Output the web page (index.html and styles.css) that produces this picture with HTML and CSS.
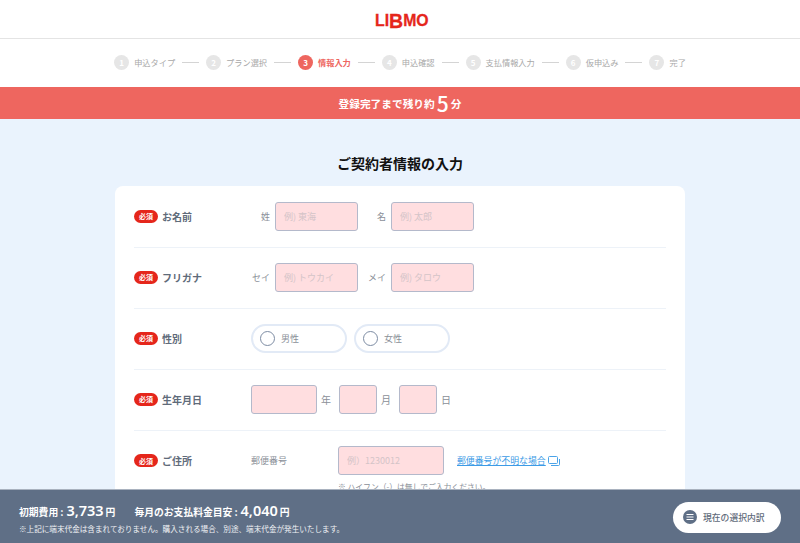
FILE: index.html
```html
<!DOCTYPE html>
<html lang="ja">
<head>
    <meta charset="UTF-8">
    <meta name="viewport" content="width=device-width, initial-scale=1.0">
    <title>LIBMO お申込み</title>
    <link rel="stylesheet" href="styles.css">
</head>
<body>
    <div class="scroll">
        <header class="logo-bar">
            <div class="logo">LI<span class="logo-b">B</span>MO</div>
        </header>

        <!-- Steps -->
        <ol class="steps">
            <li class="step"><span class="num">1</span>申込タイプ</li>
            <li class="line"></li>
            <li class="step"><span class="num">2</span>プラン選択</li>
            <li class="line"></li>
            <li class="step current"><span class="num">3</span>情報入力</li>
            <li class="line"></li>
            <li class="step"><span class="num">4</span>申込確認</li>
            <li class="line"></li>
            <li class="step"><span class="num">5</span>支払情報入力</li>
            <li class="line"></li>
            <li class="step"><span class="num">6</span>仮申込み</li>
            <li class="line"></li>
            <li class="step"><span class="num">7</span>完了</li>
        </ol>

        <div class="banner">登録完了まで残り約<span class="banner-num">5</span>分</div>

        <main class="content">
            <h1>ご契約者情報の入力</h1>

            <div class="card">
                <div class="row">
                    <div class="row-label"><span class="must">必須</span>お名前</div>
                    <div class="fields">
                        <label class="pre pre-name">姓</label>
                        <input class="input w82" type="text" placeholder="例) 東海">
                        <label class="pre pre-name">名</label>
                        <input class="input w82" type="text" placeholder="例) 太郎">
                    </div>
                </div>

                <div class="row">
                    <div class="row-label"><span class="must">必須</span>フリガナ</div>
                    <div class="fields">
                        <label class="pre pre-name">セイ</label>
                        <input class="input w82" type="text" placeholder="例) トウカイ">
                        <label class="pre pre-name">メイ</label>
                        <input class="input w82" type="text" placeholder="例) タロウ">
                    </div>
                </div>

                <div class="row">
                    <div class="row-label"><span class="must">必須</span>性別</div>
                    <div class="fields gender">
                        <div class="radio"><span class="circle"></span>男性</div>
                        <div class="radio"><span class="circle"></span>女性</div>
                    </div>
                </div>

                <div class="row">
                    <div class="row-label"><span class="must">必須</span>生年月日</div>
                    <div class="fields birth">
                        <input class="input w66" type="text">
                        <span class="unit">年</span>
                        <input class="input w38" type="text">
                        <span class="unit">月</span>
                        <input class="input w38" type="text">
                        <span class="unit">日</span>
                    </div>
                </div>

                <div class="row row-last">
                    <div class="row-label"><span class="must">必須</span>ご住所</div>
                    <div class="address">
                        <div class="fields">
                            <span class="zip-label">郵便番号</span>
                            <input class="input w106" type="text" placeholder="例）1230012">
                            <a class="zip-link" href="#">郵便番号が不明な場合</a>
                            <svg class="ext" width="12" height="10" viewBox="0 0 12 10" fill="none" stroke="#4aa3e8" stroke-width="1">
                                <rect x="0.500" y="0.500" width="9" height="7" rx="1"/>
                                <path d="M11.500 3v5.500a1 1 0 0 1-1 1H3"/>
                            </svg>
                        </div>
                        <p class="note">※ ハイフン（-）は無しでご入力ください。</p>
                    </div>
                </div>
            </div>
        </main>
    </div>

    <footer class="summary">
        <div class="prices">
            <div class="price-line">
                <span>初期費用</span><span class="colon">:</span><span class="price-num">3,733</span><span class="yen">円</span>
                <span class="price-second">毎月のお支払料金目安</span><span class="colon">:</span><span class="price-num">4,040</span><span class="yen">円</span>
            </div>
            <p class="price-note">※上記に端末代金は含まれておりません。購入される場合、別途、端末代金が発生いたします。</p>
        </div>
        <button class="detail-btn">
            <svg width="14" height="14" viewBox="0 0 14 14">
                <circle cx="7" cy="7" r="7" fill="#5f6f86"/>
                <path d="M3.500 4.500h7M3.500 7h7M3.500 9.500h7" stroke="#fff" stroke-width="1"/>
            </svg>
            現在の選択内訳
        </button>
    </footer>
</body>
</html>
```

FILE: styles.css
```css
* {
    box-sizing: border-box;
}
html, body {
    height: 100%;
}
body {
    margin: 0;
    display: flex;
    flex-direction: column;
    overflow: hidden;
    font-family: "Noto Sans CJK JP", "Noto Sans", sans-serif;
    color: #5f6b7a;
    background: #fff;
}
.scroll {
    flex: 1;
    min-height: 0;
    overflow: hidden;
}
.logo-bar {
    height: 39px;
    border-bottom: 1px solid #e4e4e4;
    display: flex;
    justify-content: center;
    align-items: center;
}
.logo {
    font-family: "Liberation Sans", sans-serif;
    font-weight: bold;
    font-size: 17px;
    line-height: 17px;
    color: #e5261b;
    -webkit-text-stroke: 0.3px #e5261b;
    padding-top: 3px;
    margin-left: 3px;
    transform: scaleX(0.93);
}
.logo-b {
    font-size: 21px;
    line-height: 17px;
    vertical-align: -2px;
}

.steps {
    list-style: none;
    margin: 0;
    padding: 0 0 2px;
    height: 48px;
    display: flex;
    justify-content: center;
    align-items: center;
    gap: 7px;
    font-size: 8.200px;
    color: #a8a8a8;
}
.step {
    display: flex;
    align-items: center;
    gap: 5px;
}
.num {
    width: 15px;
    height: 15px;
    border-radius: 50%;
    background: #e6e6e6;
    color: #fff;
    font-size: 8px;
    font-weight: bold;
    display: flex;
    align-items: center;
    justify-content: center;
}
.line {
    width: 17px;
    height: 1px;
    background: #d4d4d4;
}
.current {
    color: #ee665f;
    font-weight: bold;
}
.current .num {
    background: #ee665f;
}

.banner {
    height: 32px;
    background: #ee665f;
    color: #fff;
    font-size: 10.700px;
    font-weight: bold;
    display: flex;
    justify-content: center;
    align-items: center;
    gap: 2px;
}
.banner-num {
    font-size: 21px;
    font-weight: 500;
    line-height: 20px;
}

.content {
    background: #eaf3fd;
    padding-top: 34px;
    height: 600px;
}
h1 {
    margin: 0 0 13px;
    font-size: 14px;
    line-height: 20px;
    font-weight: bold;
    text-align: center;
    color: #111;
}
.card {
    width: 570px;
    margin: 0 auto;
    background: #fff;
    border-radius: 8px;
    padding: 1px 19px 0;
}
.row {
    display: flex;
    align-items: center;
    height: 61px;
    padding-bottom: 2px;
    border-bottom: 1px solid #edf2f8;
}
.row-last {
    align-items: flex-start;
    padding: 15px 0 0;
    height: 100px;
    border-bottom: none;
}
.row-label {
    width: 117px;
    display: flex;
    align-items: center;
    gap: 4px;
    font-size: 10px;
    font-weight: bold;
    color: #5f6b7a;
}
.row-last .row-label {
    height: 29px;
}
.must {
    width: 24px;
    height: 13px;
    border-radius: 7px;
    background: #e5261b;
    color: #fff;
    font-size: 7px;
    display: flex;
    align-items: center;
    justify-content: center;
}
.fields {
    display: flex;
    align-items: center;
}
.pre {
    font-size: 9px;
    color: #8a8f98;
    text-align: right;
    margin-right: 5px;
}
.pre-name {
    width: 19px;
}
.input + .pre-name {
    margin-left: 9.500px;
}
.input {
    height: 29px;
    background: #ffdee0;
    border: 1px solid #b4b9cb;
    border-radius: 3px;
    padding: 0 8px;
    font-family: inherit;
    font-size: 9px;
}
.input::placeholder {
    color: #d4c4c8;
}
.w82 {
    width: 82.500px;
}
.w66 {
    width: 66px;
}
.w38 {
    width: 38px;
}
.w106 {
    width: 106px;
}

.radio {
    width: 96px;
    height: 29px;
    border: 2px solid #e2eaf6;
    border-radius: 15px;
    padding-left: 7px;
    display: flex;
    align-items: center;
    gap: 6px;
    font-size: 9px;
    color: #8a8f98;
}
.gender {
    gap: 7px;
}
.circle {
    width: 15px;
    height: 15px;
    border-radius: 50%;
    border: 1px solid #7d8ca3;
    background: #fff;
}
.unit {
    font-size: 10px;
    color: #8a8f98;
    margin: 0 8px 0 4px;
}

.zip-label {
    width: 87px;
    font-size: 9px;
    color: #8a8f98;
}
.zip-link {
    margin-left: 13px;
    margin-right: 2px;
    font-size: 8.900px;
    color: #3c9be6;
}
.ext {
    margin-top: 1px;
}
.note {
    margin: 5px 0 0 87px;
    font-size: 7.800px;
    line-height: 14px;
    color: #8a8f98;
}

.summary {
    flex: none;
    height: 54px;
    background: #5f6f86;
    border-top: 1px solid #a9b2bf;
    color: #fff;
    display: flex;
    justify-content: space-between;
    align-items: center;
    padding: 0 19px;
}
.prices {
    padding-top: 3px;
}
.price-line {
    display: flex;
    align-items: baseline;
    font-size: 9.800px;
    font-weight: bold;
    line-height: 18px;
}
.colon {
    margin: 0 3px 0 2px;
}
.price-num {
    font-family: "Noto Sans", sans-serif;
    font-size: 14.500px;
    font-weight: 600;
}
.yen {
    margin-left: 2px;
}
.price-second {
    margin-left: 19px;
}
.price-note {
    margin: 2px 0 0;
    font-size: 7.600px;
    line-height: 12px;
    color: #f0f2f5;
}
.detail-btn {
    width: 108px;
    height: 31px;
    border: none;
    border-radius: 16px;
    background: #fff;
    color: #5f6b7a;
    font-family: inherit;
    font-size: 8.800px;
    font-weight: 500;
    display: flex;
    align-items: center;
    gap: 6px;
    padding: 0 0 0 10px;
    margin-top: 1px;
}
```
